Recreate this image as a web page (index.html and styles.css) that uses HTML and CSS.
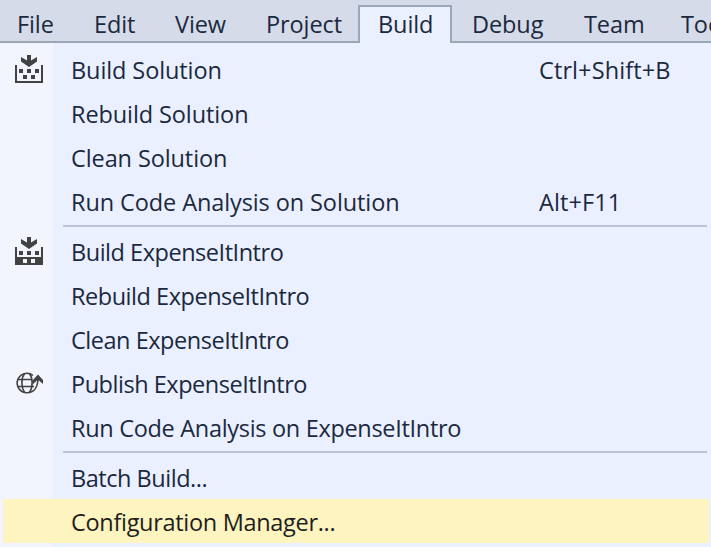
FILE: index.html
```
<!DOCTYPE html>
<html lang="en">
<head>
<meta charset="utf-8">
<title>Build menu</title>
<link rel="stylesheet" href="styles.css">
</head>
<body>
<nav class="menubar">
  <span class="tab">File</span>
  <span class="tab">Edit</span>
  <span class="tab">View</span>
  <span class="tab">Project</span>
  <span class="tab active">Build</span>
  <span class="tab">Debug</span>
  <span class="tab">Team</span>
  <span class="tab">Tools</span>
</nav>
<main class="menu">
  <div class="item">
    <svg class="icon" width="28" height="28" viewBox="0 0 28 28" shape-rendering="crispEdges"><path d="M0 10h2v16h24V10h2v18H0z M4 14h4v4H4z M12 14h4v4h-4z M20 14h4v4h-4z M8 20h4v4H8z M16 20h4v4h-4z"/><path shape-rendering="auto" d="M12 0h4v5.500l6-3.500v4.500L14 12 6 6.500V2l6 3.500z"/></svg>
    <span class="label">Build Solution</span><span class="key">Ctrl+Shift+B</span>
  </div>
  <div class="item"><span class="label">Rebuild Solution</span></div>
  <div class="item"><span class="label">Clean Solution</span></div>
  <div class="item"><span class="label">Run Code Analysis on Solution</span><span class="key">Alt+F11</span></div>
  <hr>
  <div class="item tight">
    <svg class="icon" width="28" height="28" viewBox="0 0 28 28" shape-rendering="crispEdges"><path fill-rule="evenodd" d="M0 10h2v10h24V10h2v18H0z M8 22h4v4H8z M16 22h4v4h-4z"/><path d="M4 14h4v4H4z M12 14h4v4h-4z M20 14h4v4h-4z"/><path shape-rendering="auto" d="M12 0h4v5.500l6-3.500v4.500L14 12 6 6.500V2l6 3.500z"/></svg>
    <span class="label">Build ExpenseItIntro</span>
  </div>
  <div class="item tight"><span class="label">Rebuild ExpenseItIntro</span></div>
  <div class="item tight"><span class="label">Clean ExpenseItIntro</span></div>
  <div class="item tight">
    <svg class="icon" width="28" height="28" viewBox="0 0 28 28"><g fill="none" stroke="#424242" stroke-width="1.600"><path d="M18 6.500A9.700 9.700 0 1 0 12 23.700C19 23.700 23 18 23 9"/><path d="M9.500 4.500C6 9 6 18 9.500 23.500M14.500 4.500c3.500 4.500 3.500 14 0 19M3 10.500h14M3 17.500h16"/></g><path d="M23 5.500l5.500 6v4L24 11.500h-2L17.500 15.500v-4z"/></svg>
    <span class="label">Publish ExpenseItIntro</span>
  </div>
  <div class="item medium"><span class="label">Run Code Analysis on ExpenseItIntro</span></div>
  <hr>
  <div class="item tight"><span class="label">Batch Build...</span></div>
  <div class="item medium selected"><span class="label">Configuration Manager...</span></div>
</main>
</body>
</html>
```
FILE: styles.css
```
* { box-sizing: border-box; }
body {
  margin: 0;
  height: 547px;
  overflow: hidden;
  font: 23.5px/40px "Open Sans", "Noto Sans", sans-serif;
  letter-spacing: -0.1px;
  color: #1b293e;
  background: #eaf0ff;
}
.menubar {
  display: grid;
  grid-template-columns: 77px 81px 91px 92px 94px 112px 97px 80px;
  height: 43px;
  padding: 5px 0 0 17px;
  overflow: hidden;
  background: #d6dbe9;
  box-shadow: inset 0 -2px #9ba7b7;
  white-space: nowrap;
}
.tab { line-height: 38px; }
.active {
  padding-left: 18px;
  line-height: 34px;
  border: 2px solid #9ba7b7;
  border-bottom: 0;
  background: #eaf0ff;
}
.tab:nth-child(n+6) { padding-left: 20px; }
.menu {
  height: 504px;
  padding-top: 4px;
  background: linear-gradient(to right, #f2f4fe 53px, #eaf0ff 53px);
}
.item {
  display: grid;
  grid-template-columns: 56px 468px 1fr;
  align-items: center;
  height: 44px;
  margin: 0 2px 0 3px;
  padding-left: 12px;
  white-space: nowrap;
}
.icon { grid-column: 1; grid-row: 1; fill: #424242; }
.label { grid-column: 2; grid-row: 1; padding-top: 2px; }
.key { grid-column: 3; grid-row: 1; padding-top: 2px; letter-spacing: 0.1px; }
.tight { letter-spacing: -0.47px; }
.medium { letter-spacing: -0.31px; }
.selected { background: #fdf4bf; color: #1e1e1e; }
hr {
  height: 2px;
  margin: 2px 4px 2px 63px;
  border: 0;
  background: #bec3cf;
}
```
